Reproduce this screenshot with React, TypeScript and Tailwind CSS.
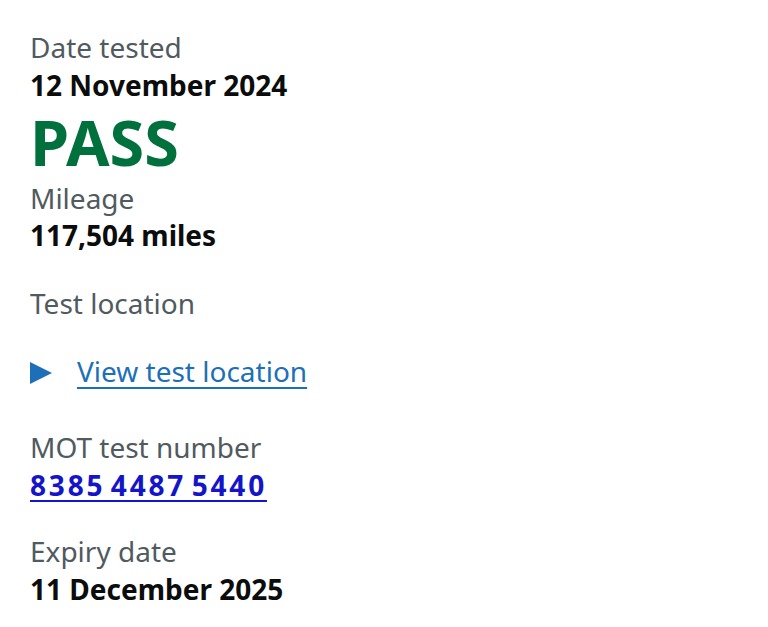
import React from "react";

const font = { fontFamily: '"Noto Sans", Arial, sans-serif' };

export default function App() {
  return (
    <div className="min-h-[627px] w-[768px] bg-white pl-[30px] pt-[28px] text-[#0b0c0c]" style={font}>
      <div className="text-[28px] leading-[38px] text-[#505a5f]">Date tested</div>
      <div className="text-[28px] font-bold leading-[38px]">12 November 2024</div>
      <div className="text-[63px] font-bold leading-[76px] text-[#00703c]">PASS</div>
      <div className="text-[28px] leading-[36px] text-[#505a5f]">Mileage</div>
      <div className="text-[28px] font-bold leading-[38px]">117,504 miles</div>
      <div className="mt-[30px] text-[28px] leading-[38px] text-[#505a5f]">Test location</div>
      <div className="mt-[30px] flex items-center">
        <svg width="22" height="22" viewBox="0 0 22 22" className="shrink-0 translate-y-[2px]">
          <polygon points="0,0 22,11 0,22" fill="#1d70b8" />
        </svg>
        <a href="#" className="ml-[25px] text-[28px] leading-[38px] text-[#1d70b8] underline decoration-[2px] underline-offset-[5px]">
          View test location
        </a>
      </div>
      <div className="mt-[38px] text-[28px] leading-[38px] text-[#505a5f]">MOT test number</div>
      <div>
        <a href="#" className="text-[28px] font-bold leading-[38px] tracking-[2.8px] [word-spacing:-4.5px] text-[#1414c8] underline decoration-[2px] underline-offset-[4px]">
          8385 4487 5440
        </a>
      </div>
      <div className="mt-[28px] text-[28px] leading-[38px] text-[#505a5f]">Expiry date</div>
      <div className="text-[28px] font-bold leading-[38px]">11 December 2025</div>
    </div>
  );
}
